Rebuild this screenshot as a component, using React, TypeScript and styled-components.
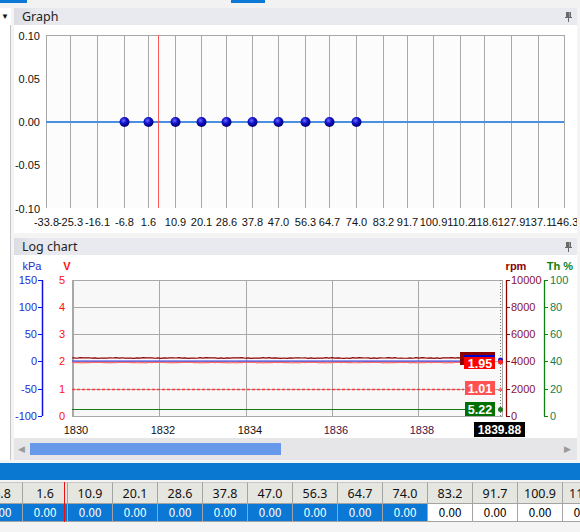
import React from "react";
import styled, { createGlobalStyle } from "styled-components";

const GlobalStyle = createGlobalStyle`
  html, body {
    margin: 0;
    padding: 0;
    background: #f4f4f4;
    font-family: "Liberation Sans", Arial, sans-serif;
  }
`;

const Page = styled.div`
  width: 580px;
  height: 532px;
  overflow: hidden;
  background: #f4f4f4;
  display: flex;
  flex-direction: column;
`;

const TopStrip = styled.div`
  height: 8px;
  background: #f2f2f2;
  display: flex;
  align-items: flex-start;
`;

const Tab = styled.div<{ $w: number; $ml: number }>`
  width: ${(p) => p.$w}px;
  margin-left: ${(p) => p.$ml}px;
  height: 3px;
  background: #0a78d4;
`;

const Workspace = styled.div`
  height: 452px;
  display: flex;
`;

const Gutter = styled.div`
  width: 11px;
  background: #fff;
  display: flex;
  flex-direction: column;
  margin-right: 3px;
`;

const Drop = styled.div`
  height: 17px;
  padding: 5px 0 0 1px;
  box-sizing: border-box;
  font-size: 8px;
  line-height: 8px;
  color: #111;
`;

const GutterLine = styled.div`
  flex: 1;
  width: 10px;
  border-right: 1px solid #c6c6c6;
`;

const Main = styled.div`
  width: 563px;
  display: flex;
  flex-direction: column;
  gap: 5px;
`;

const Panel = styled.div`
  background: #fff;
  display: flex;
  flex-direction: column;
`;

const Header = styled.div`
  height: 17px;
  display: flex;
  align-items: center;
  justify-content: space-between;
  padding: 0 4px 0 8px;
  background: linear-gradient(90deg, #dcdce4 0px, #e9e9f0 24px, #e9e9f0 100%);
  font-family: "Noto Sans", "Open Sans", sans-serif;
  font-size: 12.5px;
  color: #1e1e1e;
`;

const Scrollbar = styled.div`
  height: 22px;
  background: #e6e6e9;
  display: flex;
  align-items: center;
  padding: 0 6px 0 4px;
  gap: 5px;
  color: #9a9a9a;
  font-size: 9px;
`;

const Thumb = styled.div`
  width: 251px;
  height: 12px;
  background: #6699ea;
`;

const Track = styled.div`
  flex: 1;
`;

const BlueBar = styled.div`
  height: 17px;
  margin-top: 3px;
  background: #0a78d0;
`;

const Table = styled.div`
  margin-top: 2px;
  position: relative;
  overflow: hidden;
`;

const Row = styled.div`
  display: flex;
  margin-left: -22px;
`;

const HeadCell = styled.div`
  flex: 0 0 45px;
  box-sizing: border-box;
  height: 21px;
  border-right: 1px solid #a3a3a3;
  border-top: 1px solid #c8c8c8;
  background: #e6e6e1;
  display: flex;
  align-items: center;
  justify-content: center;
  font-family: "Noto Sans", "Open Sans", sans-serif;
  font-size: 12.5px;
  color: #111;
`;

const DataCell = styled.div<{ $sel: boolean }>`
  flex: 0 0 45px;
  box-sizing: border-box;
  height: 19px;
  border-right: 1px solid #a3a3a3;
  border-bottom: 1px solid #a3a3a3;
  border-top: 1px solid #a3a3a3;
  background: ${(p) => (p.$sel ? "#0a78d4" : "#fff")};
  color: ${(p) => (p.$sel ? "#fff" : "#000")};
  display: flex;
  align-items: center;
  justify-content: center;
  font-family: "DejaVu Sans Condensed", "Liberation Sans Narrow", "Liberation Sans", sans-serif;
  font-stretch: condensed;
  font-size: 12px;
  letter-spacing: -0.3px;
`;

const Cursor = styled.div`
  position: absolute;
  left: 64px;
  top: 0;
  width: 1px;
  height: 40px;
  background: #e81010;
`;

const Pin = () => (
  <svg width="9" height="10" viewBox="0 0 9 10">
    <rect x="2" y="0" width="5" height="5" fill="#6a6a6a" />
    <rect x="1" y="5" width="7" height="1" fill="#6a6a6a" />
    <rect x="4" y="6" width="1" height="4" fill="#6a6a6a" />
    <rect x="5" y="0" width="1" height="5" fill="#9a9a9a" />
  </svg>
);

const gx = [46, 70, 97, 124, 148, 175, 201, 226, 252, 278, 305, 329, 356, 383, 407, 433, 460, 484, 511, 538, 564];
const gLabels = ["-33.8", "-25.3", "-16.1", "-6.8", "1.6", "10.9", "20.1", "28.6", "37.8", "47.0", "56.3", "64.7", "74.0", "83.2", "91.7", "100.9", "110.2", "118.6", "127.9", "137.1", "146.3"];

const GraphChart = () => (
  <svg width="563" height="208" style={{ display: "block" }}>
    <defs>
      <radialGradient id="ball" cx="0.4" cy="0.35" r="0.7">
        <stop offset="0" stopColor="#6a6aff" />
        <stop offset="0.45" stopColor="#1010c8" />
        <stop offset="1" stopColor="#000060" />
      </radialGradient>
    </defs>
    <g transform="translate(-14,-25)" fontFamily="'Liberation Sans', Arial, sans-serif" fontSize="11">
      <rect x="46" y="35" width="518" height="173" fill="#fcfcfc" />
      <line x1="46" y1="35.5" x2="564" y2="35.5" stroke="#a8a8a8" />
      {gx.map((x) => (
        <line key={x} x1={x + 0.5} y1="35" x2={x + 0.5} y2="208" stroke="#a8a8a8" />
      ))}
      <line x1="46" y1="122" x2="564" y2="122" stroke="#4a8fe0" strokeWidth="2" />
      <line x1="158.5" y1="35" x2="158.5" y2="208" stroke="#ff5a5a" />
      {gx.slice(3, 13).map((x) => (
        <circle key={x} cx={x + 0.5} cy="122" r="5" fill="url(#ball)" />
      ))}
      {[
        ["0.10", 36],
        ["0.05", 79],
        ["0.00", 122],
        ["-0.05", 165],
        ["-0.10", 209],
      ].map(([t, y]) => (
        <text key={t} x="40" y={(y as number) + 4} textAnchor="end" fill="#111">
          {t}
        </text>
      ))}
      {gx.map((x, i) => (
        <text key={i} x={x + 0.5} y="226" textAnchor="middle" fill="#111">
          {gLabels[i]}
        </text>
      ))}
    </g>
  </svg>
);

const ys = [280, 307, 334, 361, 389, 416];
const vx = [72, 159, 246, 332, 418];

// small jitter so the logged traces look like real data
const noisy = (y: number, seed: number) => {
  let d = `M72 ${y}`;
  for (let x = 74; x <= 462; x += 3) {
    const j = Math.sin(x * 0.9 + seed) * 0.25 + Math.sin(x * 2.3 + seed * 2) * 0.2;
    d += ` L${x} ${(y + j).toFixed(2)}`;
  }
  return d;
};

const LogChart = () => (
  <svg width="563" height="183" style={{ display: "block" }}>
    <g transform="translate(-14,-255)" fontFamily="'Liberation Sans', Arial, sans-serif" fontSize="11">
      <text x="32" y="270" textAnchor="middle" fill="#2a2ad0">kPa</text>
      <text x="67" y="270" textAnchor="middle" fill="#ff1010" fontWeight="bold">V</text>
      <text x="516" y="270" textAnchor="middle" fill="#8b0000" fontWeight="bold">rpm</text>
      <text x="560" y="270" textAnchor="middle" fill="#108010" fontWeight="bold">Th %</text>

      <line x1="42.5" y1="280" x2="42.5" y2="416" stroke="#1010e0" strokeWidth="1.5" />
      {ys.map((y, i) => (
        <g key={y}>
          <line x1="38" y1={y + 0.5} x2="42" y2={y + 0.5} stroke="#1010e0" />
          <text x="37" y={y + 4} textAnchor="end" fill="#2a2ad0">
            {["150", "100", "50", "0", "-50", "-100"][i]}
          </text>
          <text x="62" y={y + 4} textAnchor="middle" fill="#ff1010">
            {5 - i}
          </text>
        </g>
      ))}

      <rect x="72.5" y="280.5" width="430" height="136" fill="#f8f8f8" stroke="#a8a8a8" />
      <line x1="73.5" y1="280" x2="73.5" y2="416" stroke="#a8a8a8" />
      {ys.map((y) => (
        <line key={y} x1="72" y1={y + 0.5} x2="502" y2={y + 0.5} stroke="#a8a8a8" />
      ))}
      {vx.map((x) => (
        <line key={x} x1={x + 0.5} y1="280" x2={x + 0.5} y2="416" stroke="#a8a8a8" />
      ))}
      <line x1="500.5" y1="280" x2="500.5" y2="416" stroke="#777" strokeDasharray="1 2" />

      <path d={noisy(358, 1)} fill="none" stroke="#8b0000" strokeWidth="1.2" />
      <path d={noisy(362.5, 3)} fill="none" stroke="#ff6a6a" strokeWidth="1.2" />
      <line x1="72" y1="361" x2="462" y2="361" stroke="#3030f0" strokeWidth="1.2" />
      <line x1="72" y1="389.5" x2="464" y2="389.5" stroke="#ff3a3a" strokeWidth="1.3" strokeDasharray="3 2" />
      <line x1="72" y1="409.5" x2="465" y2="409.5" stroke="#1a7a1a" strokeWidth="1.2" />

      <rect x="460" y="352" width="35" height="13" fill="#8b0000" />
      <rect x="464" y="356" width="31" height="13" fill="#ff0000" />
      <rect x="464" y="355" width="31" height="2" fill="#0000cc" />
      <text x="480" y="368" textAnchor="middle" fill="#fff" fontWeight="bold" fontSize="12.5">1.95</text>
      <rect x="465" y="381" width="30" height="14" fill="#ff5252" />
      <text x="480" y="393" textAnchor="middle" fill="#fff" fontWeight="bold" fontSize="12.5">1.01</text>
      <rect x="465" y="402" width="30" height="14" fill="#007000" />
      <text x="480" y="414" textAnchor="middle" fill="#fff" fontWeight="bold" fontSize="12.5">5.22</text>
      <circle cx="500.5" cy="360" r="2.5" fill="#1010d0" />
      <circle cx="500.5" cy="362" r="2.5" fill="#ff2020" />
      <path d="M498 391 L500.5 387 L503 391 Z" fill="#ff6060" />
      <circle cx="500.5" cy="409.5" r="2.5" fill="#1a7a1a" />

      <line x1="506.5" y1="280" x2="506.5" y2="416" stroke="#8b0000" strokeWidth="1.3" />
      <line x1="544.5" y1="280" x2="544.5" y2="416" stroke="#108010" strokeWidth="1.3" />
      {ys.map((y, i) => (
        <g key={y}>
          <line x1="506" y1={y + 0.5} x2="510" y2={y + 0.5} stroke="#8b0000" />
          <text x="511" y={y + 4} fill="#8b1030">
            {["10000", "8000", "6000", "4000", "2000", "0"][i]}
          </text>
          <line x1="544" y1={y + 0.5} x2="548" y2={y + 0.5} stroke="#108010" />
          <text x="550" y={y + 4} fill="#108050">
            {["100", "80", "60", "40", "20", "0"][i]}
          </text>
        </g>
      ))}

      {vx.map((x, i) => (
        <text key={x} x={x + 4} y="434" textAnchor="middle" fill={i > 2 ? "#40104a" : "#111"}>
          {1830 + i * 2}
        </text>
      ))}
      <rect x="474" y="422" width="51" height="15" fill="#000" />
      <text x="499.5" y="434" textAnchor="middle" fill="#fff" fontWeight="bold" fontSize="12">1839.88</text>
    </g>
  </svg>
);

const heads = ["-6.8", "1.6", "10.9", "20.1", "28.6", "37.8", "47.0", "56.3", "64.7", "74.0", "83.2", "91.7", "100.9", "110.2"];

export default function App() {
  return (
    <Page>
      <GlobalStyle />
      <TopStrip>
        <Tab $w={27} $ml={0} />
        <Tab $w={34} $ml={204} />
      </TopStrip>
      <Workspace>
        <Gutter>
          <Drop>▼</Drop>
          <GutterLine />
        </Gutter>
        <Main>
          <Panel>
            <Header>
              <span>Graph</span>
              <Pin />
            </Header>
            <GraphChart />
          </Panel>
          <Panel>
            <Header>
              <span>Log chart</span>
              <Pin />
            </Header>
            <LogChart />
            <Scrollbar>
              <span>◀</span>
              <Thumb />
              <Track />
              <span>▶</span>
            </Scrollbar>
          </Panel>
        </Main>
      </Workspace>
      <BlueBar />
      <Table>
        <Row>
          {heads.map((h) => (
            <HeadCell key={h}>{h}</HeadCell>
          ))}
        </Row>
        <Row>
          {heads.map((h, i) => (
            <DataCell key={h} $sel={i < 10}>
              0.00
            </DataCell>
          ))}
        </Row>
        <Cursor />
      </Table>
    </Page>
  );
}
